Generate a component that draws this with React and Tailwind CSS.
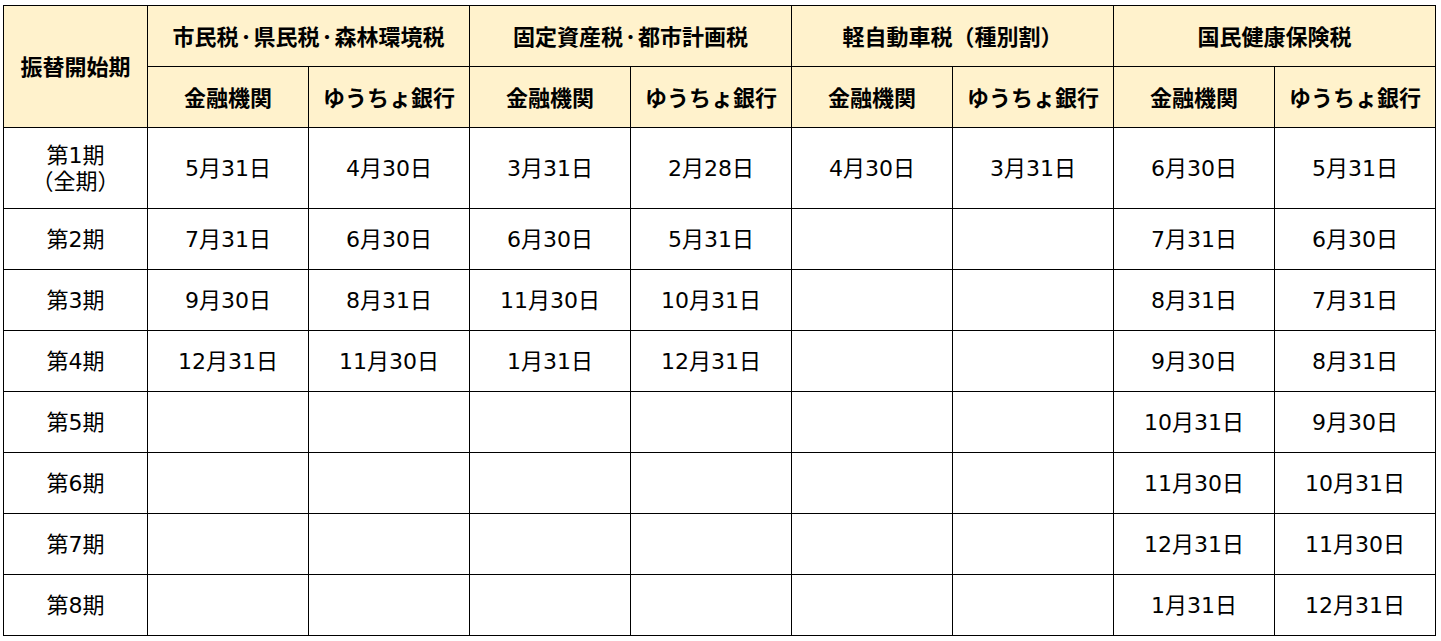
const taxes = [
  ["市民税", "・", "県民税", "・", "森林環境税"],
  ["固定資産税", "・", "都市計画税"],
  ["軽自動車税（種別割）"],
  ["国民健康保険税"],
];

const rows = [
  { label: ["第1期", "（全期）"], dates: ["5月31日", "4月30日", "3月31日", "2月28日", "4月30日", "3月31日", "6月30日", "5月31日"] },
  { label: ["第2期"], dates: ["7月31日", "6月30日", "6月30日", "5月31日", "", "", "7月31日", "6月30日"] },
  { label: ["第3期"], dates: ["9月30日", "8月31日", "11月30日", "10月31日", "", "", "8月31日", "7月31日"] },
  { label: ["第4期"], dates: ["12月31日", "11月30日", "1月31日", "12月31日", "", "", "9月30日", "8月31日"] },
  { label: ["第5期"], dates: ["", "", "", "", "", "", "10月31日", "9月30日"] },
  { label: ["第6期"], dates: ["", "", "", "", "", "", "11月30日", "10月31日"] },
  { label: ["第7期"], dates: ["", "", "", "", "", "", "12月31日", "11月30日"] },
  { label: ["第8期"], dates: ["", "", "", "", "", "", "1月31日", "12月31日"] },
];

const head = "bg-[#fff2cc] flex items-center justify-center font-bold pt-[3px]";
const cell = "bg-white flex items-center justify-center pt-[2px]";

export default function App() {
  return (
    <div className="min-h-screen bg-white pt-[5px] pl-[3px] font-['DejaVu_Sans','Noto_Sans_CJK_JP',sans-serif] text-[22px] text-black">
      <div className="grid w-max grid-cols-[143px_repeat(8,160px)] grid-rows-[60px_60px_80px_repeat(7,60px)] gap-px bg-black p-px leading-[26px]">
        <div className={`${head} row-span-2`}>振替開始期</div>
        {taxes.map((t) => (
          <div key={t.join("")} className={`${head} col-span-2`}>
            {t.map((p, i) =>
              p === "・" ? (
                <span key={i} className="text-[15px] font-black">
                  {p}
                </span>
              ) : (
                <span key={i}>{p}</span>
              )
            )}
          </div>
        ))}
        {taxes.map((t) => (
          <>
            <div key={t.join("") + "a"} className={head}>金融機関</div>
            <div key={t.join("") + "b"} className={head}>ゆうちょ銀行</div>
          </>
        ))}
        {rows.map((r) => (
          <>
            <div key={r.label[0]} className={`${cell} flex-col`}>
              {r.label.map((l) => (
                <span key={l}>{l}</span>
              ))}
            </div>
            {r.dates.map((d, i) => (
              <div key={r.label[0] + i} className={cell}>
                {d}
              </div>
            ))}
          </>
        ))}
      </div>
    </div>
  );
}
